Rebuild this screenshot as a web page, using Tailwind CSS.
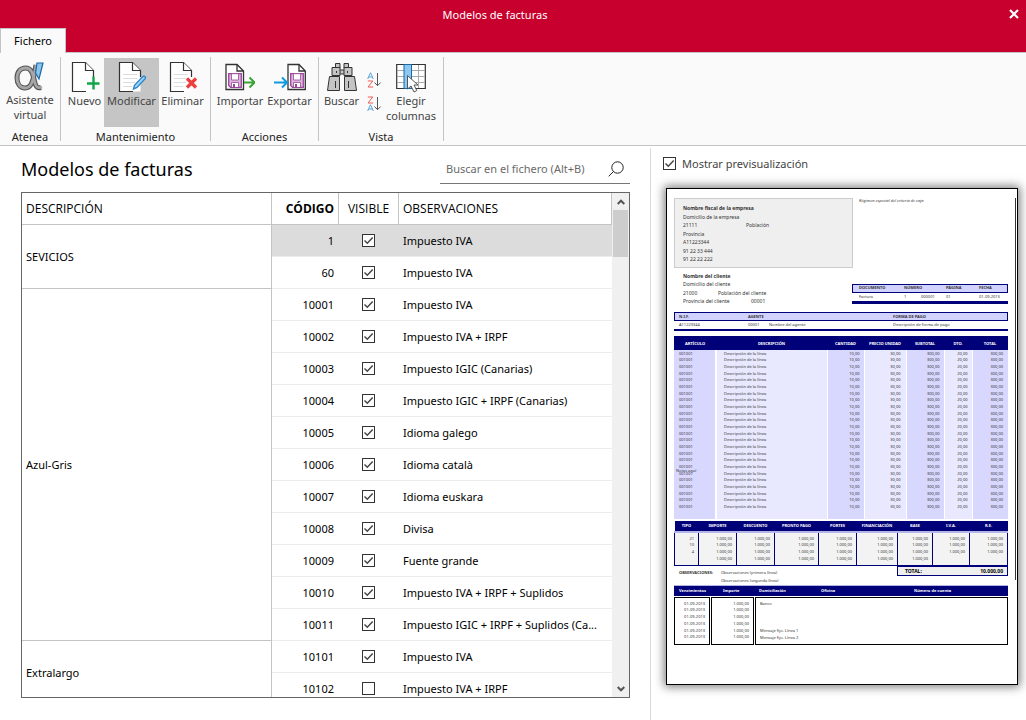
<!DOCTYPE html>
<html lang="es">
<head>
<meta charset="utf-8">
<title>Modelos de facturas</title>
<script src="https://cdn.jsdelivr.net/npm/@tailwindcss/browser@4"></script>
</head>
<body class="flex h-screen flex-col overflow-hidden bg-white font-['Noto_Sans',sans-serif] text-[11px] leading-[15px] text-black">

<svg class="hidden">
  <symbol id="page" viewBox="0 0 30 32"><path d="M2.500 1.500H15.500L23.500 9.500V30.500H2.500Z" fill="#fff"/><path d="M16 30.500H2.500V1.500H15.500L23.500 9.500V16" fill="none" stroke="#333" stroke-width="1.200"/><path d="M15.500 1.500V9.500H23.500" fill="#fff" stroke="#333" stroke-width="1.200"/></symbol>
  <symbol id="lines" viewBox="0 0 30 32"><path d="M6 13.500H20M6 17.500H20M6 21.500H18M6 25.500H15" stroke="#ddd" fill="none"/></symbol>
  <symbol id="disk" viewBox="0 0 14 15"><path d="M.7.7H13.300V14.300H2.500L.7 12.500Z" fill="#dcb6dc" stroke="#99479a" stroke-width="1.300"/><path d="M3.500.7H10.500V7H3.500Z" fill="#fff" stroke="#99479a" stroke-width=".8"/><path d="M3.500 14V9.500H10.500V14" fill="#fff" stroke="#99479a" stroke-width=".8"/><path d="M5 11H7V14H5Z" fill="#99479a"/></symbol>
  <symbol id="tick" viewBox="0 0 13 13"><path d="M2.500 6.500 5.300 9.300 10.700 3.500" fill="none" stroke="#444" stroke-width="1.400"/></symbol>
</svg>

<header class="bg-[#c8002d]">
  <div class="flex h-7 items-center">
    <h1 class="flex-1 text-center text-white">Modelos de facturas</h1>
    <button class="flex h-5 w-9 items-center justify-center pl-3" aria-label="Cerrar">
      <svg class="size-[10px]" viewBox="0 0 10 10"><path d="M1 1 9 9M9 1 1 9" stroke="#fff" stroke-width="2.200"/></svg>
    </button>
  </div>
  <nav class="flex">
    <button class="h-[25px] w-[66px] border border-b-0 border-[#c4c4c4] bg-[#fafafa] pb-px">Fichero</button>
    <div class="flex-1 border-b border-[#c4c4c4]"></div>
  </nav>
</header>

<section class="flex h-[93px] border-b border-[#c4c4c4] bg-[#fafafa] text-[#444]" aria-label="Cinta">
  <div class="mt-1 mb-1 flex w-[61px] flex-col justify-between border-r border-[#c4c4c4]">
    <button class="mt-px flex flex-col items-center pt-1">
      <svg class="h-[30px] w-8" viewBox="0 0 32 30"><path d="M22 3C19 21 17 26 11 26 6 26 3 21.500 3 16 3 10 6.500 6 11.500 6 18 6 19 13 21 21 22 25 23.500 26.500 27 25.500" fill="none" stroke="#555" stroke-width="5"/><path d="M22 3C19 21 17 26 11 26 6 26 3 21.500 3 16 3 10 6.500 6 11.500 6 18 6 19 13 21 21 22 25 23.500 26.500 28 25" fill="none" stroke="#a6a6a6" stroke-width="2.800"/><path d="M23 1H29L25 17 21.500 11Z" fill="#8cc4ec" stroke="#1769aa" stroke-width="1.200"/></svg>
      <span>Asistente<br>virtual</span>
    </button>
    <h2 class="-mb-[3px] text-center text-[#222]">Atenea</h2>
  </div>
  <div class="mt-1 mb-1 flex w-[150px] flex-col justify-between border-r border-[#c4c4c4]">
    <div class="flex justify-center">
      <button class="mt-px flex w-[39px] flex-col items-center pt-[3px]">
        <svg class="h-8 w-[30px]" viewBox="0 0 30 32"><use href="#page"/><path d="M23.500 15.500V28.500M17 22.500H29.500" stroke="#10a548" stroke-width="2.400"/></svg>
        Nuevo
      </button>
      <button class="mt-px flex h-[69px] w-[55px] flex-col items-center bg-[#c5c5c5] pt-[3px]">
        <svg class="h-8 w-[30px]" viewBox="0 0 30 32"><use href="#page"/><use href="#lines"/><path d="M25.800 15.500C28 14.500 29.300 16.200 28 17.800L20 26.500 16.500 28 17.500 24.300Z" fill="#a5d4f5" stroke="#2c88cc" stroke-width="1.400"/></svg>
        Modificar
      </button>
      <button class="mt-px flex w-[47px] flex-col items-center pt-[3px]">
        <svg class="h-8 w-[30px]" viewBox="0 0 30 32"><use href="#page"/><use href="#lines"/><path d="M19 17.500 28 26.500M28 17.500 19 26.500" stroke="#ee3d3d" stroke-width="3.200"/></svg>
        Eliminar
      </button>
    </div>
    <h2 class="-mb-[3px] text-center text-[#222]">Mantenimiento</h2>
  </div>
  <div class="mt-1 mb-1 flex w-[108px] flex-col justify-between border-r border-[#c4c4c4]">
    <div class="flex justify-center">
      <button class="mt-px flex w-[50px] flex-col items-center pt-[3px]">
        <svg class="h-8 w-[30px]" viewBox="0 0 30 32"><path d="M1 3.500H12L18.500 10V28.500H1Z" fill="#fff" stroke="#333" stroke-width="1.300"/><path d="M12 3.500V10H18.500" fill="none" stroke="#333" stroke-width="1.300"/><use href="#disk" x="3" y="12" width="14" height="15"/><path d="M19 21.500H29M24.500 16.500 29.500 21.500 24.500 26.500" fill="none" stroke="#3ca437" stroke-width="2"/></svg>
        Importar
      </button>
      <button class="mt-px flex w-[49px] flex-col items-center pt-[3px]">
        <svg class="h-8 w-8" viewBox="0 0 32 32"><path d="M14 3.500H25L31.300 10V28.500H14Z" fill="#fff" stroke="#333" stroke-width="1.300"/><path d="M25 3.500V10H31" fill="none" stroke="#333" stroke-width="1.300"/><use href="#disk" x="16" y="12" width="14" height="15"/><path d="M0 21.500H12M8 16.500 13 21.500 8 26.500" fill="none" stroke="#0f9ae0" stroke-width="2"/></svg>
        Exportar
      </button>
    </div>
    <h2 class="-mb-[3px] text-center text-[#222]">Acciones</h2>
  </div>
  <div class="mt-1 mb-1 flex w-[125px] flex-col justify-between border-r border-[#c4c4c4]">
    <div class="flex pl-[2px]">
      <button class="mt-px flex w-[41px] flex-col items-center self-start pt-[3px]">
        <svg class="h-8 w-[30px]" viewBox="0 0 30 32"><g fill="#c4c4c4" stroke="#333"><path d="M8.500 2.500H13V7H8.500ZM17 2.500H21.500V7H17ZM12 9H18V13H12Z"/><path d="M5 6.500H13V14.500H5ZM17 6.500H25V14.500H17Z"/><path d="M2.500 15.500H12.500V29.500H.5ZM17.500 15.500H27.500L29.500 29.500H17.500Z"/><path d="M8.500 20V27M21.500 20V27M9.500 10V12M20.500 10V12" fill="none"/></g></svg>
        Buscar
      </button>
      <div class="flex w-6 flex-col items-center gap-2 pt-[15px]">
        <button aria-label="Orden ascendente"><svg class="h-4 w-[15px]" viewBox="0 0 15 16"><path d="M.7 7 3.500.7 6.300 7M1.500 5H5.500" fill="none" stroke="#5aa5d8"/><path d="M.8 9H5.800L1 15H6.200" fill="none" stroke="#ee5b5b"/><path d="M10.500 1V13.500M7.500 10.500 10.500 13.700 13.700 10.500" fill="none" stroke="#555"/></svg></button>
        <button aria-label="Orden descendente"><svg class="h-4 w-[15px]" viewBox="0 0 15 16"><path d="M.8 1H5.800L1 7H6.200" fill="none" stroke="#ee5b5b"/><path d="M.7 15 3.500 8.700 6.300 15M1.500 13H5.500" fill="none" stroke="#5aa5d8"/><path d="M10.500 1V13.500M7.500 10.500 10.500 13.700 13.700 10.500" fill="none" stroke="#555"/></svg></button>
      </div>
      <button class="mt-px flex w-[50px] flex-col items-center pt-[3px]">
        <svg class="h-8 w-[30px]" viewBox="0 0 30 32"><path d="M.7 3.500H29.300V27.500H.7Z" fill="#fff" stroke="#333" stroke-width="1.200"/><path d="M1 9.500H29M1 15.500H29M1 21.500H29M22.500 4V27" stroke="#aaa" fill="none"/><path d="M8 3.500H15.500V27.500H8Z" fill="#8cc8ef" stroke="#1769aa"/><path d="M11.500 14.500V28L15 25 18 31 20.800 29.500 18 24H22Z" fill="#fff" stroke="#555"/></svg>
        <span>Elegir<br>columnas</span>
      </button>
    </div>
    <h2 class="-mb-[3px] text-center text-[#222]">Vista</h2>
  </div>
</section>

<main class="flex min-h-0 flex-1 pt-[2px]">
  <section class="flex min-w-0 flex-1 flex-col pr-5 pb-[22px] pl-[21px]">
    <div class="flex items-end justify-between pb-2">
      <h2 class="pb-[3px] text-[18px] leading-6">Modelos de facturas</h2>
      <label class="flex h-9 w-[190px] items-center border-b border-[#777] pt-[6px] pr-[6px] pl-[6px]">
        <input type="search" aria-label="Buscar en el fichero" placeholder="Buscar en el fichero (Alt+B)" class="min-w-0 flex-1 outline-none placeholder:text-[#6a6a6a]">
        <svg class="size-4" viewBox="0 0 16 16"><circle cx="9.500" cy="6.500" r="5.700" fill="none" stroke="#222" stroke-width="1"/><path d="M5.500 10.500.7 15.300" stroke="#222" stroke-width="1"/></svg>
      </label>
    </div>
    <div class="flex min-h-0 flex-1 overflow-hidden border border-[#666]">
      <div class="min-w-0 flex-1 overflow-hidden">
        <table class="w-full table-fixed border-separate border-spacing-0">
          <colgroup><col class="w-[250px]"><col class="w-[67px]"><col class="w-[60px]"><col></colgroup>
          <thead class="font-['Open_Sans',sans-serif] text-[12px]">
            <tr class="h-8">
              <th class="border-r border-b border-[#c4c4c4] pl-1 text-left font-normal">DESCRIPCIÓN</th>
              <th class="border-r border-b border-[#c4c4c4] pr-1 text-right font-bold">CÓDIGO</th>
              <th class="border-r border-b border-[#c4c4c4] font-normal">VISIBLE</th>
              <th class="border-r border-b border-[#c4c4c4] pl-1 text-left font-normal">OBSERVACIONES</th>
            </tr>
          </thead>
          <tbody id="modelos"></tbody>
        </table>
      </div>
      <div class="flex w-[17px] flex-col items-center bg-[#f0f0f0]">
        <button class="flex h-[17px] w-full items-center justify-center" aria-label="Subir"><svg class="h-[6px] w-2" viewBox="0 0 8 6"><path d="M.7 5 4 1.700 7.300 5" fill="none" stroke="#555" stroke-width="2"/></svg></button>
        <div class="h-[47px] w-[15px] bg-[#cdcdcd]"></div>
        <button class="mt-auto flex h-[17px] w-full items-center justify-center" aria-label="Bajar"><svg class="h-[6px] w-2" viewBox="0 0 8 6"><path d="M.7 1 4 4.300 7.300 1" fill="none" stroke="#555" stroke-width="2"/></svg></button>
      </div>
    </div>
  </section>

  <aside class="w-[376px] border-l border-[#d9d9d9] pr-2 pl-[15px]">
    <label class="mt-2 mb-[17px] -ml-[3px] flex items-center gap-[6px] text-[#444]">
      <span class="grid"><input type="checkbox" checked class="peer col-start-1 row-start-1 size-[13px] appearance-none border border-[#333] bg-white"><svg class="pointer-events-none invisible col-start-1 row-start-1 size-[13px] peer-checked:visible"><use href="#tick"/></svg></span>
      Mostrar previsualización
    </label>

    <article class="relative flex h-[497px] flex-col border border-black bg-white pt-[9px] pr-[9px] pl-[7px] text-[5px] leading-[6px] text-[#333] shadow-[0_0_9px_2px_rgba(0,0,0,0.5)]">
      <div class="absolute top-[9px] right-px h-[382px] w-px bg-[#333]"></div>
      <p class="absolute top-[279px] left-[9px] text-[4px] leading-[6px]">Notas aquí</p>
      <div class="flex justify-between">
        <div class="flex h-[70px] w-[179px] flex-col justify-between border border-[#ccc] bg-[#efefef] pt-[6px] pb-[5px] pl-2">
          <b>Nombre fiscal de la empresa</b><span>Domicilio de la empresa</span><span class="flex"><span class="w-[63px]">21111</span>Población</span><span>Provincia</span><span>A11223344</span><span>91 22 33 444</span><span>91 22 22 222</span>
        </div>
        <p class="w-[149px] text-[4px] leading-[6px] italic">Régimen especial del criterio de caja</p>
      </div>
      <div class="mt-[3px] flex items-end justify-between">
        <div class="flex h-[33px] flex-col justify-between pt-[2px] pl-[9px]">
          <b>Nombre del cliente</b><span>Domicilio del cliente</span><span class="flex"><span class="w-[35px]">21000</span>Población del cliente</span><span class="flex"><span class="w-[68px]">Provincia del cliente</span>00001</span>
        </div>
        <table class="w-[156px] table-fixed border-b-3 border-[#000078] text-left text-[4px] leading-[6px]">
          <colgroup><col class="w-[52px]"><col class="w-[17px]"><col class="w-[25px]"><col class="w-[33px]"><col></colgroup>
          <thead><tr class="h-[9px] bg-[#d2d2ff] outline-1 -outline-offset-1 outline-[#000078]"><th class="pl-[7px]">DOCUMENTO</th><th colspan="2">NÚMERO</th><th>PÁGINA</th><th>FECHA</th></tr></thead>
          <tbody><tr class="h-[10px]"><td class="pl-[7px]">Factura</td><td>1</td><td>000001</td><td>01</td><td>01-09-2013</td></tr></tbody>
        </table>
      </div>

      <table class="mt-2 w-full table-fixed border-b-2 border-[#000078] text-left text-[4px] leading-[6px]">
        <colgroup><col class="w-[74px]"><col class="w-[21px]"><col class="w-[124px]"><col></colgroup>
        <thead><tr class="h-[9px] bg-[#d2d2ff] outline-1 -outline-offset-1 outline-[#000078]"><th class="pl-[5px]">N.I.F.</th><th colspan="2">AGENTE</th><th>FORMA DE PAGO</th></tr></thead>
        <tbody><tr class="h-[9px]"><td class="pl-[5px]">A11223344</td><td>00001</td><td>Nombre del agente</td><td>Descripción de forma de pago</td></tr></tbody>
      </table>

      <table class="mt-[5px] w-full table-fixed text-[4px] leading-[5px]">
        <colgroup><col class="w-[42px]"><col class="w-[111px]"><col class="w-[37px]"><col class="w-[42px]"><col class="w-[38px]"><col class="w-[28px]"><col></colgroup>
        <thead><tr class="h-[14px] bg-[#000078] text-white"><th>ARTÍCULO</th><th>DESCRIPCIÓN</th><th>CANTIDAD</th><th>PRECIO UNIDAD</th><th>SUBTOTAL</th><th>DTO.</th><th>TOTAL</th></tr></thead>
      </table>
      <table class="h-[169px] w-full table-fixed text-right text-[4px] leading-[5px]">
        <colgroup><col class="w-[42px] bg-[#d8d8ff]"><col class="w-[111px] bg-[#e8e8ff]"><col class="w-[37px] bg-[#d8d8ff]"><col class="w-[42px] bg-[#e8e8ff]"><col class="w-[38px] bg-[#d8d8ff]"><col class="w-[28px] bg-[#e8e8ff]"><col class="bg-[#d8d8ff]"></colgroup>
        <tbody id="lineas"></tbody>
      </table>

      <table class="mt-[2px] w-full table-fixed text-right text-[4px] leading-[6px]">
        <colgroup><col class="w-6"><col class="w-[38px]"><col class="w-[38px]"><col class="w-[44px]"><col class="w-[38px]"><col class="w-[41px]"><col class="w-[35px]"><col class="w-[37px]"><col></colgroup>
        <thead><tr class="h-[11px] border-b-2 border-[#b4b4e6] bg-[#000078] text-center text-white"><th>TIPO</th><th>IMPORTE</th><th>DESCUENTO</th><th>PRONTO PAGO</th><th>PORTES</th><th>FINANCIACIÓN</th><th>BASE</th><th>I.V.A.</th><th>R.E.</th></tr></thead>
        <tbody id="impuestos"></tbody>
      </table>

      <div class="flex items-start justify-between">
        <div class="grid grid-cols-[42px_1fr] gap-y-[2px] pt-1 pl-[5px] text-[4px] leading-[6px]"><b>OBSERVACIONES:</b><span>Observaciones (primera línea)</span><span></span><span>Observaciones (segunda línea)</span></div>
        <p class="flex h-[10px] w-[111px] items-center justify-between border border-[#000078] bg-[#efefef] px-1 pl-[7px] font-bold text-black"><span>TOTAL:</span><span>10.000,00</span></p>
      </div>

      <div class="mt-px grid h-[11px] grid-cols-[44px_36px_62px_93px_1fr] items-center border-t border-[#b4b4e6] bg-[#000078] pl-[5px] text-[4px] font-bold text-white"><span>Vencimientos</span><span>Importe</span><span>Domiciliación</span><span>Oficina</span><span>Número de cuenta</span></div>
      <div class="mt-px grid h-12 grid-cols-[36px_43px_1fr] gap-px text-[4px]">
        <div class="flex flex-col justify-between border border-black px-1 py-[3px] text-right"><span>01-09-2013</span><span>01-09-2013</span><span>01-09-2013</span><span>01-09-2013</span><span>01-09-2013</span><span>01-09-2013</span></div>
        <div class="flex flex-col justify-between border border-black px-1 py-[3px] text-right"><span>1.000,00</span><span>1.000,00</span><span>1.000,00</span><span>1.000,00</span><span>1.000,00</span><span>1.000,00</span></div>
        <div class="flex flex-col border border-black px-1 py-[3px]"><span>Banco</span><span class="mt-auto">Mensaje fijo. Línea 1</span><span class="mt-px">Mensaje fijo. Línea 2</span></div>
      </div>
    </article>
  </aside>
</main>

<script>
  const grupos = [
    ['SEVICIOS', [['1', 'Impuesto IVA'], ['60', 'Impuesto IVA']]],
    ['Azul-Gris', [['10001', 'Impuesto IVA'], ['10002', 'Impuesto IVA + IRPF'], ['10003', 'Impuesto IGIC (Canarias)'], ['10004', 'Impuesto IGIC + IRPF (Canarias)'], ['10005', 'Idioma galego'], ['10006', 'Idioma català'], ['10007', 'Idioma euskara'], ['10008', 'Divisa'], ['10009', 'Fuente grande'], ['10010', 'Impuesto IVA + IRPF + Suplidos'], ['10011', 'Impuesto IGIC + IRPF + Suplidos (Ca...']]],
    ['Extralargo', [['10101', 'Impuesto IVA'], ['10102', 'Impuesto IVA + IRPF']]],
  ];
  const ocultos = ['10102'];
  document.getElementById('modelos').innerHTML = grupos.map(([nombre, filas]) => filas.map(([codigo, obs], i) => `
    <tr class="h-8">
      ${i ? '' : `<td rowspan="${filas.length}" class="border-r border-b border-[#c4c4c4] pl-1">${nombre}</td>`}
      <td class="border-b border-[#ececec] pr-[5px] text-right ${codigo === '1' ? 'bg-[#dcdcdc]' : ''}">${codigo}</td>
      <td class="border-b border-[#ececec] pr-[2px] ${codigo === '1' ? 'bg-[#dcdcdc]' : ''}"><span class="mx-auto grid w-[13px]"><input type="checkbox" aria-label="Visible ${codigo}" ${ocultos.includes(codigo) ? '' : 'checked'} class="peer col-start-1 row-start-1 size-[13px] appearance-none border border-[#333] bg-white"><svg class="pointer-events-none invisible col-start-1 row-start-1 size-[13px] peer-checked:visible"><use href="#tick"/></svg></span></td>
      <td class="border-b border-[#ececec] pl-1 whitespace-nowrap ${codigo === '1' ? 'bg-[#dcdcdc]' : ''}">${obs}</td>
    </tr>`).join('')).join('');

  document.getElementById('lineas').innerHTML = Array.from({ length: 24 }, () => `
    <tr><td class="border-r-2 border-white p-0 pl-[5px] text-left">001001</td><td class="border-r border-white p-0 pl-[7px] text-left">Descripción de la línea</td><td class="border-r border-white pr-1">10,00</td><td class="border-r border-white pr-[5px]">30,00</td><td class="border-r border-white pr-1">300,00</td><td class="border-r border-white pr-1">20,00</td><td class="pr-[5px]">300,00</td></tr>`).join('')
    + '<tr class="h-[9px]"><td class="border-r-2 border-white"></td><td class="border-r border-white"></td><td class="border-r border-white"></td><td class="border-r border-white"></td><td class="border-r border-white"></td><td class="border-r border-white"></td><td></td></tr>';

  const m = '1.000,00';
  const impuestos = [['21', m, m, m, m, m, m, m, m], ['10', m, m, m, m, m, m, m, m], ['4', m, m, m, m, m, m, m, m], ['', m, m, m, m, m, m, '', '']];
  document.getElementById('impuestos').innerHTML = impuestos.map((fila, i) => `
    <tr class="${i === 0 ? 'h-[10px] border-t border-[#000078]' : i === 3 ? 'h-[9px] border-b border-[#000078]' : 'h-[7px]'} bg-[#f3f3f3]">${fila.map(v => `<td class="border-x border-[#000078] pr-1 ${i === 0 ? 'align-bottom' : 'align-top'}">${v}</td>`).join('')}</tr>`).join('');
</script>
</body>
</html>
